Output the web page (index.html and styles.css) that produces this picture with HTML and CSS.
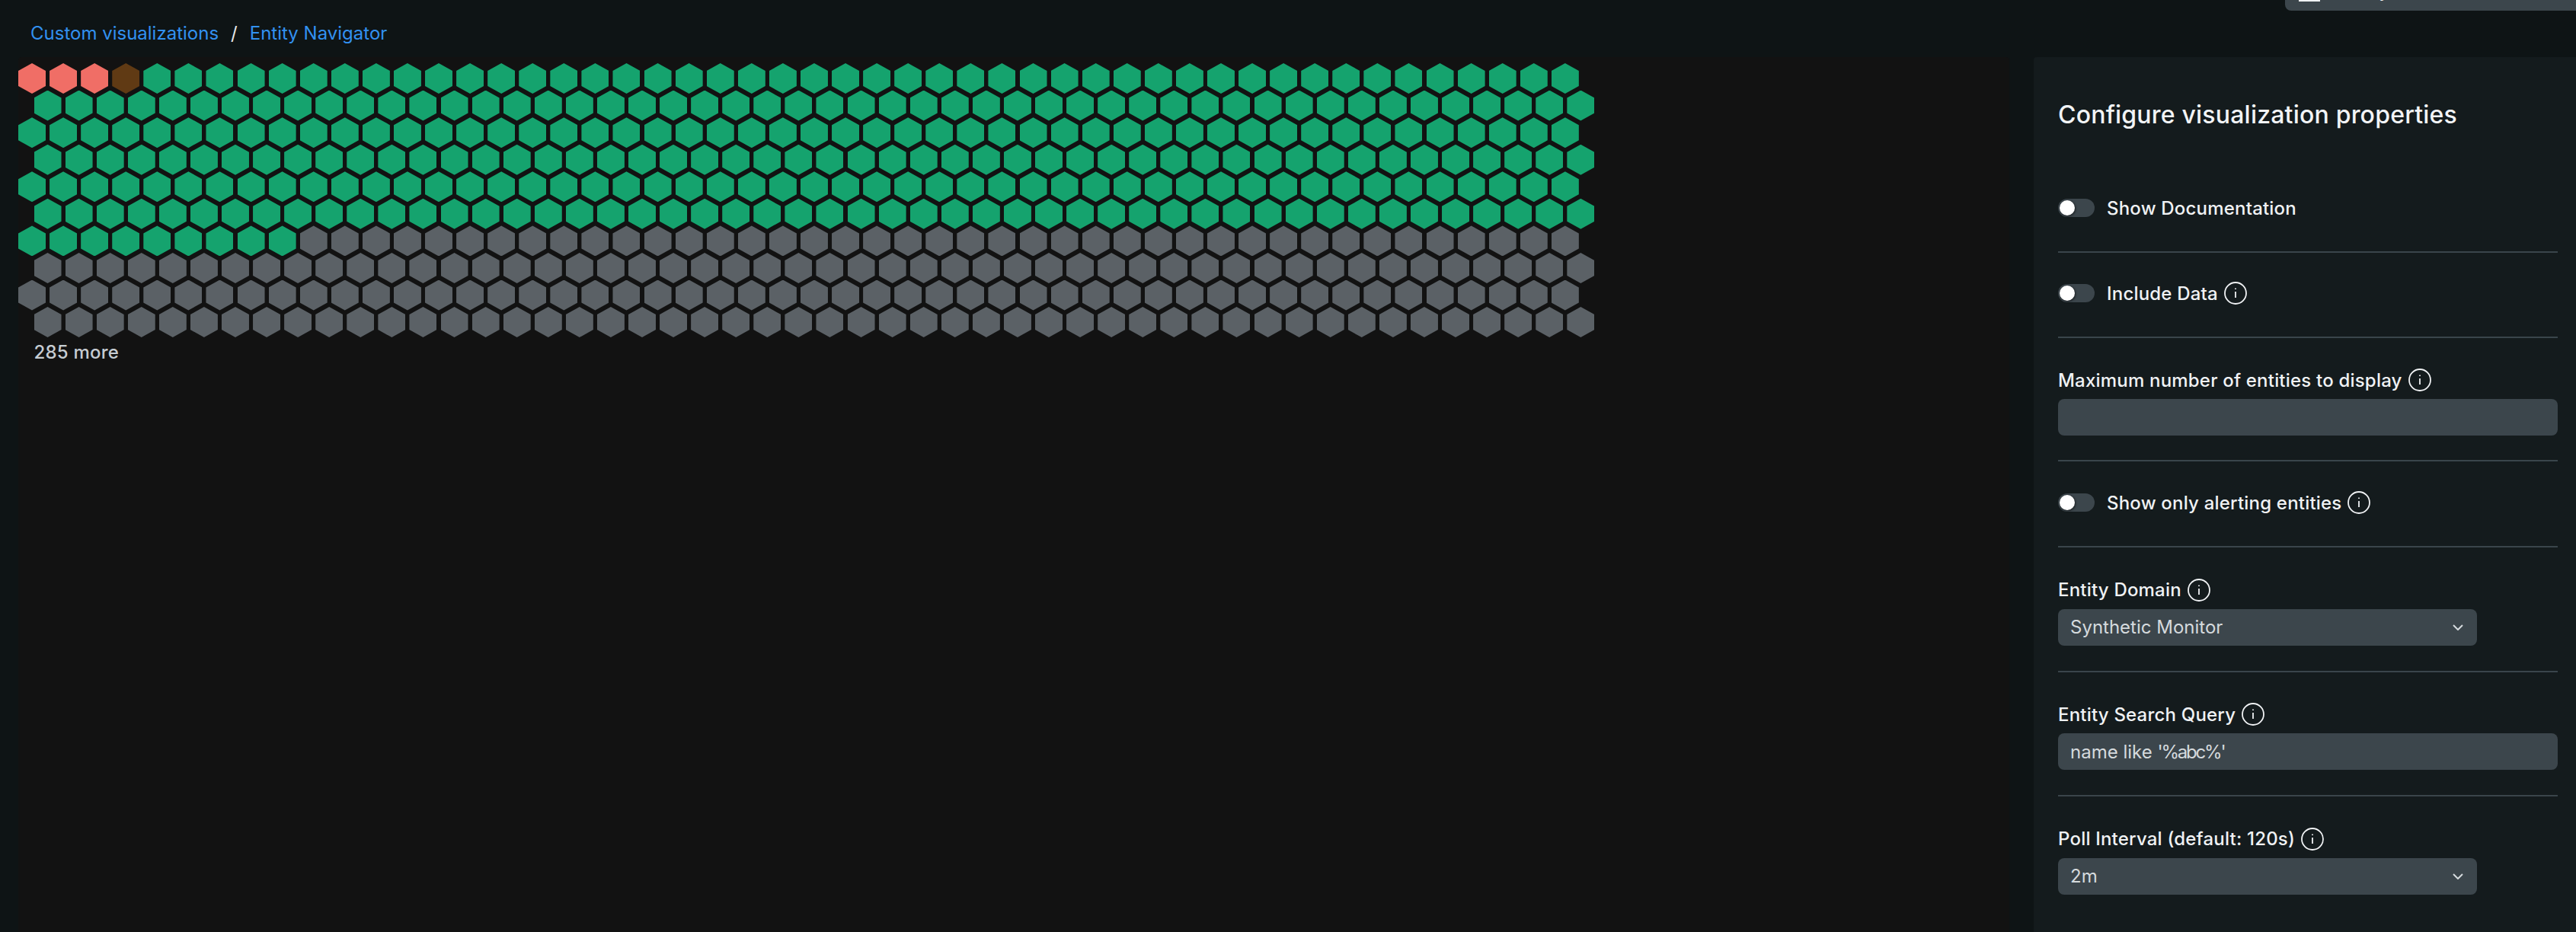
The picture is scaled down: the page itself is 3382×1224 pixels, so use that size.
FILE: index.html
```html
<!DOCTYPE html>
<html>
<head>
<meta name="viewport" content="width=device-width, initial-scale=1">
<link rel="stylesheet" href="styles.css">
</head>
<body>

<header class="topbar">
  <nav class="crumbs">
    <a href="#">Custom visualizations</a>
    <span class="slash">/</span>
    <a href="#">Entity Navigator</a>
  </nav>
  <div class="topbtn"><span class="topbtn-in"><i class="topbtn-icon"></i>Entity</span></div>
</header>

<main class="main">
  <div class="canvas">
    <div id="hexes"></div>
    <div class="more">285 more</div>
  </div>

  <aside class="panel">
    <h2 class="title">Configure visualization properties</h2>

    <section class="sec sec-toggle">
      <div class="row"><span class="toggle"></span><span class="lbl">Show Documentation</span></div>
    </section>

    <section class="sec sec-toggle">
      <div class="row">
        <span class="toggle"></span><span class="lbl">Include Data</span>
        <svg class="info" viewBox="0 0 30 30"><circle cx="15" cy="15" r="14"/><line x1="15" y1="13" x2="15" y2="21"/><line x1="15" y1="8.5" x2="15" y2="10"/></svg>
      </div>
    </section>

    <section class="sec sec-field first-field">
      <div class="row">
        <span class="lbl">Maximum number of entities to display</span>
        <svg class="info" viewBox="0 0 30 30"><circle cx="15" cy="15" r="14"/><line x1="15" y1="13" x2="15" y2="21"/><line x1="15" y1="8.5" x2="15" y2="10"/></svg>
      </div>
      <div class="field"></div>
    </section>

    <section class="sec sec-toggle sec-alert">
      <div class="row">
        <span class="toggle"></span><span class="lbl">Show only alerting entities</span>
        <svg class="info" viewBox="0 0 30 30"><circle cx="15" cy="15" r="14"/><line x1="15" y1="13" x2="15" y2="21"/><line x1="15" y1="8.5" x2="15" y2="10"/></svg>
      </div>
    </section>

    <section class="sec sec-field">
      <div class="row">
        <span class="lbl">Entity Domain</span>
        <svg class="info" viewBox="0 0 30 30"><circle cx="15" cy="15" r="14"/><line x1="15" y1="13" x2="15" y2="21"/><line x1="15" y1="8.5" x2="15" y2="10"/></svg>
      </div>
      <div class="field select">
        Synthetic Monitor
        <svg class="chev" viewBox="0 0 14 8"><polyline points="1,1 7,7 13,1"/></svg>
      </div>
    </section>

    <section class="sec sec-field">
      <div class="row">
        <span class="lbl">Entity Search Query</span>
        <svg class="info" viewBox="0 0 30 30"><circle cx="15" cy="15" r="14"/><line x1="15" y1="13" x2="15" y2="21"/><line x1="15" y1="8.5" x2="15" y2="10"/></svg>
      </div>
      <div class="field"><span>name like <span class="quoted">'%abc%'</span></span></div>
    </section>

    <section class="sec sec-field last">
      <div class="row">
        <span class="lbl">Poll Interval (default: 120s)</span>
        <svg class="info" viewBox="0 0 30 30"><circle cx="15" cy="15" r="14"/><line x1="15" y1="13" x2="15" y2="21"/><line x1="15" y1="8.5" x2="15" y2="10"/></svg>
      </div>
      <div class="field select">
        2m
        <svg class="chev" viewBox="0 0 14 8"><polyline points="1,1 7,7 13,1"/></svg>
      </div>
    </section>
  </aside>
</main>

<script src="hexes.js"></script>
</body>
</html>
```
FILE: styles.css
```css
html, body {
    margin: 0;
    height: 100%;
}

body {
    display: flex;
    flex-direction: column;
    overflow: hidden;
    font-family: Inter, "Liberation Sans", sans-serif;
    font-size: 24px;
    background-color: #0e1415;
    color: #f0f2f4;
}

.topbar {
    display: flex;
    justify-content: space-between;
    height: 75px;
    flex: none;
}

.crumbs {
    display: flex;
    gap: 16px;
    padding: 29px 0 0 40px;
    line-height: 30px;
    height: 30px;
}

.crumbs a {
    color: #3291f0;
    text-decoration: none;
}

.slash {
    color: #e6e8ea;
}

.topbtn {
    position: relative;
    width: 382px;
    height: 14px;
    overflow: hidden;
    background-color: #3c464c;
    border-bottom-left-radius: 8px;
}

.topbtn-in {
    position: absolute;
    left: 73px;
    bottom: 10.7px;
    line-height: 30px;
    white-space: nowrap;
}

.topbtn-icon {
    position: absolute;
    left: -55px;
    bottom: 1.3px;
    width: 28px;
    height: 28px;
    background-color: #f0f2f4;
}

.main {
    flex: 1;
    display: flex;
    gap: 32px;
    min-height: 0;
}

.canvas {
    margin-left: 24px;
    width: 2614px;
    padding-top: 8px;
    background-color: #121212;
    border-radius: 4px 4px 0 0;
    box-sizing: border-box;
}

.hexrow {
    display: flex;
    gap: 5.08px;
    margin-bottom: -4.44px;
}

.hexrow.odd {
    margin-left: 20.5px;
}

.hex {
    flex: none;
    width: 36px;
    height: 40px;
    clip-path: polygon(50% 0, 100% 25%, 100% 75%, 50% 100%, 0 75%, 0 25%);
}

.hex.red { background-color: #f06e66; }
.hex.brown { background-color: #603a14; }
.hex.green { background-color: #15a36e; }
.hex.grey { background-color: #5b6166; }

.more {
    margin: 9px 0 0 20.5px;
    line-height: 30px;
    font-weight: 500;
    letter-spacing: 0.2px;
    color: #c6ccd2;
}

.panel {
    flex: 1;
    padding: 0 24px 0 32px;
    background-color: #141b1d;
    border-radius: 4px 0 0 0;
}

.title {
    margin: 0;
    padding-top: 54px;
    height: 129px;
    line-height: 44px;
    box-sizing: border-box;
    font-size: 32px;
    font-weight: 500;
    letter-spacing: 0.2px;
    color: #f2f4f6;
}

.sec {
    border-bottom: 2px solid #3a454b;
}

.sec.last {
    border-bottom: none;
}

.sec-toggle {
    padding: 38px 0 42px;
}

.sec-toggle:first-of-type {
    padding-top: 54px;
}

.sec-alert {
    padding-top: 39px;
}

.sec-field {
    padding: 40.5px 0 33px;
}

.first-field {
    padding: 40px 0 32px;
}

.row {
    display: flex;
    align-items: center;
    height: 30px;
    gap: 8px;
    font-weight: 500;
    letter-spacing: 0.2px;
}

.toggle {
    position: relative;
    width: 48px;
    height: 24px;
    margin-right: 8px;
    background-color: #3c464c;
    border-radius: 12px;
}

.toggle::after {
    content: "";
    position: absolute;
    left: 2px;
    top: 2px;
    width: 20px;
    height: 20px;
    background-color: #fff;
    border-radius: 50%;
    box-shadow: 1px 1px 3px rgba(0, 0, 0, 0.6);
}

.info {
    width: 30px;
    height: 30px;
    flex: none;
}

.info circle, .info line {
    fill: none;
    stroke: #f0f2f4;
    stroke-width: 1.8;
}

.field {
    display: flex;
    align-items: center;
    justify-content: space-between;
    height: 48px;
    margin-top: 10px;
    padding: 0 18px 0 16px;
    box-sizing: border-box;
    background-color: #3c464c;
    border-radius: 8px;
    color: #d5dadd;
}

.quoted {
    letter-spacing: -2.2px;
}

.select {
    width: 550px;
}

.chev {
    width: 14px;
    height: 8px;
}

.chev polyline {
    fill: none;
    stroke: #d5dadd;
    stroke-width: 2;
}
```
FILE: hexes.js
```js
// 10 rows of 50, colours run left to right, top to bottom
var ROWS = 10, COLS = 50;
var RED = 3, BROWN = 1, GREEN = 305;

var box = document.getElementById('hexes');
var n = 0;

for (var r = 0; r < ROWS; r++) {
  var row = document.createElement('div');
  row.className = r % 2 ? 'hexrow odd' : 'hexrow';
  for (var c = 0; c < COLS; c++) {
    var hex = document.createElement('div');
    var kind = 'grey';
    if (n < RED) kind = 'red';
    else if (n < RED + BROWN) kind = 'brown';
    else if (n < RED + BROWN + GREEN) kind = 'green';
    hex.className = 'hex ' + kind;
    row.appendChild(hex);
    n++;
  }
  box.appendChild(row);
}
```
